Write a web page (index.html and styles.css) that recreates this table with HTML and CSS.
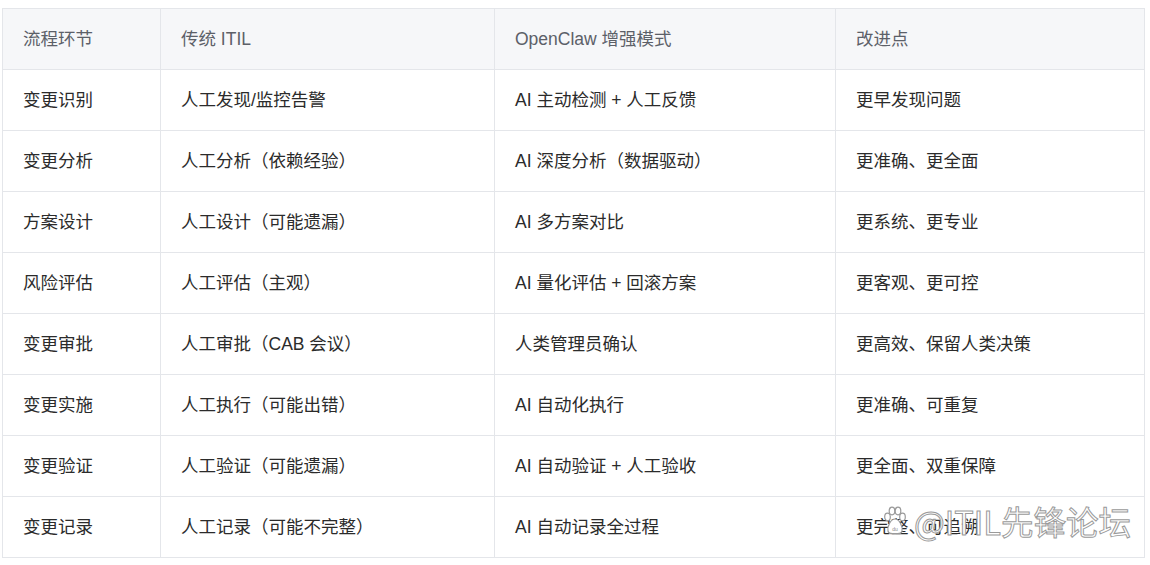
FILE: index.html
```html
<!DOCTYPE html>
<html lang="zh">
<head>
<meta charset="utf-8">
<link rel="stylesheet" href="styles.css">
</head>
<body>
<div class="page">
<table class="cmp">
<colgroup><col class="c1"><col class="c2"><col class="c3"><col class="c4"></colgroup>
<thead>
<tr><th>流程环节</th><th>传统 ITIL</th><th>OpenClaw 增强模式</th><th>改进点</th></tr>
</thead>
<tbody>
<tr><td>变更识别</td><td>人工发现/监控告警</td><td>AI 主动检测 + 人工反馈</td><td>更早发现问题</td></tr>
<tr><td>变更分析</td><td>人工分析（依赖经验）</td><td>AI 深度分析（数据驱动）</td><td>更准确、更全面</td></tr>
<tr><td>方案设计</td><td>人工设计（可能遗漏）</td><td>AI 多方案对比</td><td>更系统、更专业</td></tr>
<tr><td>风险评估</td><td>人工评估（主观）</td><td>AI 量化评估 + 回滚方案</td><td>更客观、更可控</td></tr>
<tr><td>变更审批</td><td>人工审批（CAB 会议）</td><td>人类管理员确认</td><td>更高效、保留人类决策</td></tr>
<tr><td>变更实施</td><td>人工执行（可能出错）</td><td>AI 自动化执行</td><td>更准确、可重复</td></tr>
<tr><td>变更验证</td><td>人工验证（可能遗漏）</td><td>AI 自动验证 + 人工验收</td><td>更全面、双重保障</td></tr>
<tr><td>变更记录</td><td>人工记录（可能不完整）</td><td>AI 自动记录全过程</td><td>更完整、可追溯</td></tr>
</tbody>
</table>
<div class="wm">
<svg class="paw" width="22" height="30" viewBox="0 0 22 30">
<g fill="#fff" stroke="#9a9a9a" stroke-width="1.2">
<ellipse cx="3.5" cy="11" rx="2.8" ry="3.8"/>
<ellipse cx="8" cy="5" rx="2.8" ry="3.8"/>
<ellipse cx="14" cy="5" rx="2.8" ry="3.8"/>
<ellipse cx="18.5" cy="11" rx="2.8" ry="3.8"/>
<path d="M11 13 C6.5 13 3 21 4 25 C5 29 9.5 27.5 11 27.5 C12.5 27.5 17 29 18 25 C19 21 15.5 13 11 13 Z"/>
</g>
<text x="11" y="25" font-size="5" text-anchor="middle" fill="#888" font-family="Liberation Sans, sans-serif">du</text>
</svg>
<span class="wm-text">@ITIL先锋论坛</span>
</div>
</div>
</body>
</html>
```
FILE: styles.css
```css
html, body {
  margin: 0;
  padding: 0;
  background: #ffffff;
}
.page {
  position: relative;
  padding: 8px 6px 0 2px;
  font-family: "Noto Sans CJK SC", "Liberation Sans", sans-serif;
}
.cmp {
  border-collapse: collapse;
  width: 1142px;
  table-layout: fixed;
  font-size: 17.5px;
}
.c1 { width: 158px; }
.c2 { width: 334px; }
.c3 { width: 341px; }
.c4 { width: 309px; }
.cmp th, .cmp td {
  border: 1px solid #e4e6ea;
  height: 57px;
  padding: 0 0 3px 20px;
  text-align: left;
  vertical-align: middle;
  white-space: nowrap;
  font-family: "Liberation Sans", "Noto Sans CJK SC", sans-serif;
}
.cmp th {
  background: #f6f7f9;
  color: #5c6068;
  font-weight: normal;
}
.cmp td {
  color: #2b2b2b;
}
.wm {
  position: absolute;
  left: 884px;
  top: 505px;
  display: flex;
  align-items: center;
  gap: 8px;
}
.wm-text {
  font-family: "Noto Sans CJK SC", sans-serif;
  font-size: 32.5px;
  color: #ffffff;
  -webkit-text-stroke: 1px #9a9a9a;
  line-height: 1;
}
```
